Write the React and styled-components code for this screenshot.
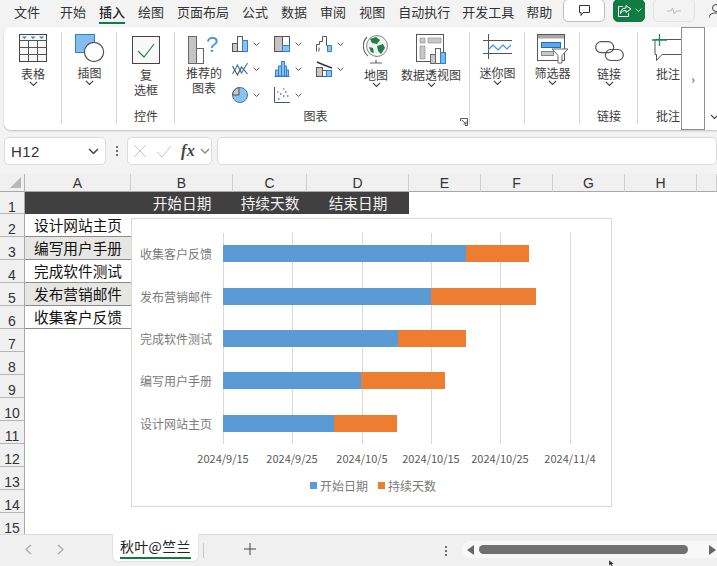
import React from 'react';
import styled, {createGlobalStyle} from 'styled-components';

const GlobalStyle = createGlobalStyle`
    html, body {
        margin: 0;
        padding: 0;
        width: 717px;
        height: 566px;
        overflow: hidden;
        background: #f3f3f3;
        font-family: "Noto Sans CJK SC", "Liberation Sans", sans-serif;
    }
    * { box-sizing: border-box; }
`;

const tabs = [
    ['文件', 14], ['开始', 20], ['插入', 13], ['绘图', 13], ['页面布局', 13], ['公式', 13],
    ['数据', 13], ['审阅', 13], ['视图', 13], ['自动执行', 13], ['开发工具', 12], ['帮助', 12],
];

const columns = [['A', 106], ['B', 102], ['C', 74], ['D', 102], ['E', 72], ['F', 72], ['G', 72], ['H', 72], ['', 20]];
const tasks = ['设计网站主页', '编写用户手册', '完成软件测试', '发布营销邮件', '收集客户反馈'];
const headers = {B: '开始日期', C: '持续天数', D: '结束日期'};
const rowNumbers = Array.from({length: 15}, (_, i) => i + 1);

const bars = [
    {name: '收集客户反馈', y: 26, start: 243, days: 63},
    {name: '发布营销邮件', y: 69, start: 208, days: 105},
    {name: '完成软件测试', y: 111, start: 175, days: 68},
    {name: '编写用户手册', y: 153, start: 138, days: 84},
    {name: '设计网站主页', y: 196, start: 111, days: 63},
];
const ticks = [
    ['2024/9/15', 92], ['2024/9/25', 161], ['2024/10/5', 231],
    ['2024/10/15', 300], ['2024/10/25', 369], ['2024/11/4', 439],
];

const Page = styled.div`
    width: 717px;
    height: 566px;
    display: flex;
    flex-direction: column;
    overflow: hidden;
    background: #f3f3f3;
    color: #333;
`;

const TopBar = styled.div`
    height: 27px;
    display: flex;
    align-items: flex-start;
    flex: none;
`;

const Tab = styled.div`
    flex: none;
    white-space: nowrap;
    margin-left: ${p => p.$gap}px;
    height: 24px;
    padding-top: 2px;
    font-size: 13px;
    line-height: 19px;
    color: ${p => (p.$active ? '#222' : '#333')};
    font-weight: ${p => (p.$active ? 500 : 400)};
    border-bottom: ${p => (p.$active ? '2px solid #107c41' : '2px solid transparent')};
`;

const TopActions = styled.div`
    margin-left: 11px;
    flex: none;
    display: flex;
    align-items: flex-start;
    gap: 8px;
`;

const ActionButton = styled.div`
    width: ${p => p.$width}px;
    flex: none;
    height: 23px;
    display: flex;
    align-items: center;
    justify-content: center;
    gap: 3px;
    margin-top: -1px;
    border-radius: 5px;
    border: 1px solid ${p => (p.$muted ? '#e4e4e4' : p.$green ? '#107c41' : '#bdbdbd')};
    background: ${p => (p.$green ? '#107c41' : p.$muted ? '#f3f3f3' : '#fff')};
`;

const Ribbon = styled.div`
    position: relative;
    height: 103px;
    margin-left: 4px;
    display: flex;
    flex: none;
    background: #fff;
    border-radius: 7px 0 0 7px;
    box-shadow: 0 1px 2px rgba(0, 0, 0, 0.22);
    font-size: 12px;
    line-height: 15px;
    color: #3c3c3c;
`;

const Group = styled.div`
    position: relative;
    width: ${p => p.$width}px;
    flex: none;
    display: flex;
    flex-direction: column;
    &::after {
        content: '';
        display: ${p => (p.$last ? 'none' : 'block')};
        position: absolute;
        right: 0;
        top: 5px;
        bottom: 6px;
        width: 1px;
        background: #d6d6d6;
    }
`;

const GroupBody = styled.div`
    flex: 1;
    min-height: 0;
    display: flex;
    justify-content: ${p => (p.$start ? 'flex-start' : 'center')};
    padding: 7px 0 0 ${p => p.$left || 0}px;
`;

const GroupCaption = styled.div`
    height: 24px;
    flex: none;
    text-align: center;
    padding-right: ${p => p.$shift || 0}px;
    line-height: 20px;
`;

const BigItem = styled.div`
    width: ${p => p.$width || 50}px;
    flex: none;
    display: flex;
    flex-direction: column;
    align-items: center;
    text-align: center;
    white-space: nowrap;
    margin-right: ${p => p.$right || 0}px;
    svg.big { flex: none; margin-bottom: ${p => p.$labelGap ?? 4}px; }
`;

const ChartPicker = styled.div`
    width: 126px;
    flex: none;
    margin: -3px 2px 0 0;
    display: grid;
    grid-template-columns: repeat(3, 42px);
    grid-auto-rows: 25.6px;
`;

const ChartType = styled.div`
    display: flex;
    align-items: center;
    gap: 5px;
`;

const Launcher = styled.svg`
    position: absolute;
    right: 2px;
    bottom: 4px;
`;

const ScrollRight = styled.div`
    position: absolute;
    left: 677px;
    top: 0;
    width: 24px;
    height: 103px;
    display: flex;
    align-items: center;
    justify-content: center;
    background: #fff;
    border: 1px solid #8f8f8f;
    font-size: 12px;
    color: #555;
`;

const CollapseSlot = styled.div`
    position: absolute;
    left: 706px;
    bottom: 11px;
    display: flex;
`;

const FormulaBar = styled.div`
    height: 28px;
    margin-top: 7px;
    flex: none;
    display: flex;
    align-items: stretch;
    padding-left: 4px;
`;

const FormulaBox = styled.div`
    width: ${p => (p.$width ? `${p.$width}px` : 'auto')};
    flex: ${p => (p.$width ? 'none' : 1)};
    display: flex;
    align-items: center;
    justify-content: space-between;
    padding: 0 6px;
    background: #fff;
    border: 1px solid #dcdcdc;
    border-radius: 5px;
    font-size: 15px;
    letter-spacing: 0.4px;
    color: #333;
    font-family: "Liberation Sans", sans-serif;
`;

const FxBox = styled(FormulaBox)`
    justify-content: flex-start;
    gap: 9px;
    padding: 0 0 0 5px;
    margin-right: 5px;
`;

const Dots = styled.div`
    width: 21px;
    flex: none;
    display: flex;
    flex-direction: column;
    align-items: center;
    justify-content: center;
    gap: 2px;
    i {
        width: 2px;
        height: 2px;
        background: #444;
        border-radius: 50%;
    }
`;

const FxLabel = styled.span`
    width: 14px;
    margin-right: -4px;
    font: italic bold 16px "Liberation Serif", serif;
    color: #444;
`;

const Sheet = styled.div`
    position: relative;
    margin-top: 9px;
    height: 360px;
    flex: none;
    overflow: hidden;
    background: #fff;
    display: grid;
    grid-template-columns: 25px 106px 102px 74px 102px 72px 72px 72px 72px 20px;
    grid-template-rows: 18px 22px repeat(14, 23px);
    font-family: "Liberation Sans", "Noto Sans CJK SC", sans-serif;
`;

const Corner = styled.div`
    background: #f0f0f0;
    border-right: 1px solid #b5b5b5;
    border-bottom: 1px solid #a8a8a8;
    position: relative;
    &::after {
        content: '';
        position: absolute;
        right: 3px;
        bottom: 3px;
        border-style: solid;
        border-width: 0 0 11px 11px;
        border-color: transparent transparent #b8b8b8 transparent;
    }
`;

const ColHead = styled.div`
    background: #f0f0f0;
    border-right: 1px solid #cfcfcf;
    border-bottom: 1px solid #a8a8a8;
    text-align: center;
    font-size: 14px;
    line-height: 19px;
    color: #333;
`;

const RowHead = styled.div`
    background: #f0f0f0;
    border-right: 1px solid #a8a8a8;
    border-bottom: 1px solid #b5b5b5;
    text-align: center;
    font-size: 14px;
    line-height: 15px;
    padding-top: 8px;
    color: #333;
    overflow: hidden;
`;

const Cell = styled.div`
    display: flex;
    align-items: center;
    justify-content: center;
    white-space: nowrap;
    padding-bottom: 2px;
    font-size: 14.67px;
    color: ${p => (p.$dark ? '#f2f2f2' : '#111')};
    background: ${p => (p.$dark ? '#404040' : p.$alt ? '#e7e6e2' : '#fff')};
    border-bottom: ${p => (p.$ruled ? '1px solid #8c8c8c' : 'none')};
`;

const ChartFrame = styled.div`
    position: absolute;
    left: 131px;
    top: 44px;
    width: 481px;
    height: 289px;
    background: #fff;
    border: 1px solid #d9d9d9;
    svg { display: block; }
    text { font-family: "Noto Sans CJK SC", "Liberation Sans", sans-serif; }
`;

const SheetBar = styled.div`
    position: relative;
    flex: 1;
    display: flex;
    align-items: flex-start;
    background: #f0f0f0;
    border-top: 1px solid #dcdcdc;
`;

const NavArrows = styled.div`
    width: 112px;
    height: 28px;
    flex: none;
    display: flex;
    align-items: center;
    gap: 25px;
    padding-left: 25px;
`;

const SheetTab = styled.div`
    width: 87px;
    height: 28px;
    margin-top: -1px;
    flex: none;
    background: #fff;
    border-radius: 0 0 6px 6px;
    border: 1px solid #e2e2e2;
    border-top: none;
    padding: 3px 7px 0;
    color: #222;
    white-space: nowrap;
    span {
        display: block;
        border-bottom: 2px solid #107c41;
        height: 22px;
        font-size: 14px;
        line-height: 19px;
        letter-spacing: 0.3px;
    }
`;

const TabSeparator = styled.div`
    width: 1px;
    height: 15px;
    margin: 8px 0 0 4px;
    background: #c8c8c8;
    flex: none;
`;

const AddSheet = styled.div`
    margin: 8px 2px 0 40px;
    width: 13px;
    height: 13px;
    display: flex;
    flex: none;
`;

const SheetDots = styled(Dots)`
    margin: 7px 0 0 180px;
    width: 14px;
    height: 17px;
`;

const ScrollTrack = styled.div`
    position: absolute;
    left: 462px;
    top: 6px;
    width: 255px;
    height: 17px;
    display: flex;
    align-items: center;
    background: #f8f8f8;
    border-radius: 8px 0 0 8px;
    padding-left: 5px;
`;

const ScrollThumb = styled.div`
    width: 209px;
    height: 9px;
    margin-left: 5px;
    border-radius: 5px;
    background: #707070;
`;

const Arrow = styled.div`
    border-style: solid;
    border-width: 5px 0 5px 0;
    border-color: transparent;
    ${p => (p.$left
        ? 'border-right: 7px solid #666;'
        : 'border-left: 7px solid #666; margin-left: 21px;')}
`;

const Pointer = styled.svg`
    position: absolute;
    left: 608px;
    top: 25px;
`;

const Chevron = ({size = 9, color = '#444'}) => (
    <svg width={size} height={size * 0.6} viewBox="0 0 10 6" style={{flex: 'none'}}>
        <path d="M1 1l4 4 4-4" fill="none" stroke={color} strokeWidth="1.3" />
    </svg>
);

const TableIcon = () => (
    <svg className="big" width="28" height="28" viewBox="0 0 28 28">
        <rect x=".5" y=".5" width="27" height="27" fill="#f7f7f7" stroke="#444" />
        <path d="M.5 6.500h27M.5 13.500h27M.5 20.500h27M9.500 6.500v21M18.500 6.500v21" stroke="#555" fill="none" />
        <path d="M3 2.500h5L5.500 5zM11.500 2.500h5L14 5zM20 2.500h5L22.500 5z" fill="#2f86d6" />
    </svg>
);

const IllustrationIcon = () => (
    <svg className="big" width="30" height="29" viewBox="0 0 30 29">
        <rect x=".5" y=".5" width="19" height="18" fill="#83bdee" stroke="#2f7fcf" />
        <circle cx="19" cy="18" r="9.600" fill="#fff" stroke="#555" strokeWidth="1.200" />
    </svg>
);

const CheckIcon = () => (
    <svg className="big" width="28" height="28" viewBox="0 0 28 28">
        <rect x=".5" y=".5" width="27" height="27" fill="#f8f8f8" stroke="#444" />
        <path d="M6 15l6 6 10-13" fill="none" stroke="#1d8a4f" strokeWidth="1.200" />
    </svg>
);

const RecommendIcon = () => (
    <svg className="big" width="32" height="36" viewBox="0 -6 32 36" style={{marginTop: -6}}>
        <rect x=".5" y="2.500" width="8" height="27" fill="#c4c4c4" stroke="#666" />
        <rect x="8.500" y="14.500" width="7" height="15" fill="#fff" stroke="#666" />
        <text x="18" y="18" fontSize="22" fill="#4a96d8" fontFamily="Liberation Sans">?</text>
    </svg>
);

const MiniChart = ({kind}) => {
    const line = '#555';
    const blue = '#8dc2ee';
    const edge = '#2f7fcf';
    const shapes = {
        column: <><rect x=".5" y="7.500" width="5" height="8" fill="#c8c8c8" stroke={line} /><rect x="5.500" y=".5" width="5" height="15" fill="#fff" stroke={line} /><rect x="10.500" y="4.500" width="5" height="11" fill={blue} stroke={edge} /></>,
        tree: <><rect x=".5" y=".5" width="8" height="15" fill="#c4c4c4" stroke={line} /><rect x="8.500" y=".5" width="7" height="9" fill="#fff" stroke={line} /><rect x="8.500" y="9.500" width="7" height="6" fill={blue} stroke={edge} /></>,
        fall: <><path d="M.5 15.500v-7h3v-3h3v-5h4v9h1" fill="none" stroke={line} /><path d="M11.500 9.500h4v6h-4z" fill={blue} stroke={edge} /><path d="M3 15.500v-4" stroke={line} /></>,
        line: <><path d="M.5 13l5-9 4 8 6-10" fill="none" stroke={edge} strokeWidth="1.200" /><path d="M.5 5l5 9 4-8 6 7" fill="none" stroke={line} strokeWidth="1.100" /></>,
        stat: <><path d="M.5 15.500h15" stroke={edge} /><path d="M1.500 15v-6h3V5h3V.5h3V5h2v4h2v6z" fill={blue} stroke={edge} /><path d="M4.500 15V9M7.500 15V5M10.500 15V5M12.500 15V9" stroke={edge} /></>,
        combo: <><rect x=".5" y="6.500" width="6" height="9" fill="#c8c8c8" stroke={line} /><rect x="6.500" y="9.500" width="4" height="6" fill="#fff" stroke={line} /><rect x="10.500" y="9.500" width="5" height="6" fill={blue} stroke={edge} /><path d="M1 1l7 3 8 3" fill="none" stroke="#333" strokeWidth="1.400" /></>,
        pie: <><circle cx="8" cy="8" r="7.500" fill={blue} stroke={edge} /><path d="M7 .6v7.400H.6A7.500 7.500 0 0 1 7 .6z" fill="#c8c8c8" stroke={line} /></>,
        scatter: <><path d="M.5 0v15.500H16" fill="none" stroke={line} /><path d="M4 12h1.500M6 7h1.500M9 9h1.500M11 5h1.500M13 9h1.500" stroke={edge} strokeWidth="1.500" /><path d="M3 5h1.500M9 2h1.500" stroke={line} /></>,
    };
    return <svg width="16" height="16" viewBox="0 0 16 16" style={{flex: 'none'}}>{shapes[kind]}</svg>;
};

const MapIcon = () => (
    <svg className="big" width="26" height="30" viewBox="0 0 26 30">
        <circle cx="14" cy="12" r="10.500" fill="#f2f2f2" stroke="#888" />
        <path d="M7 5l6-2 4 3-3 4-5-1zM14 12l6-2 2 4-4 6-3-3zM6 13l4 1 1 5-3-1z" fill="#1f7e4b" />
        <path d="M4 3a13 13 0 0 0 1 19M13 26v3M7 29h12" fill="none" stroke="#666" strokeWidth="1.200" />
    </svg>
);

const PivotIcon = () => (
    <svg className="big" width="30" height="31" viewBox="0 0 30 31">
        <rect x=".5" y=".5" width="27" height="27" fill="#fff" stroke="#555" />
        <path d="M4 4h5v5H4zM12 4h13v5H12zM4 12h5v13H4z" fill="#c8c8c8" stroke="#888" strokeWidth=".6" />
        <rect x="14.500" y="20.500" width="5" height="9" fill="#c8c8c8" stroke="#666" />
        <rect x="19.500" y="14.500" width="5" height="15" fill="#fff" stroke="#666" />
        <rect x="24.500" y="18.500" width="5" height="11" fill="#7ab8ea" stroke="#2f7fcf" />
    </svg>
);

const SparkIcon = () => (
    <svg className="big" width="30" height="25" viewBox="0 0 30 25">
        <path d="M5.500 0v25M0 6.500h29M0 19.500h29" stroke="#555" fill="none" />
        <path d="M5 16l5-5 5 5 5-5 4 4 4-4" fill="none" stroke="#3a95dc" strokeWidth="1.200" />
    </svg>
);

const FilterIcon = () => (
    <svg className="big" width="32" height="30" viewBox="0 0 32 30">
        <rect x=".5" y=".5" width="27" height="26" fill="#fff" stroke="#555" />
        <rect x="1" y="1" width="26" height="3.500" fill="#a8a8a8" />
        <rect x="4.500" y="8.500" width="19" height="5" fill="#5fa8e4" stroke="#1f6fbf" />
        <rect x="4.500" y="17.500" width="12" height="4" fill="#c8c8c8" stroke="#888" />
        <path d="M15 15h16l-6 6.500V29h-4v-7.500z" fill="#fff" stroke="#666" />
    </svg>
);

const LinkIcon = () => (
    <svg className="big" width="29" height="30" viewBox="0 -7 29 30">
        <rect x=".7" y=".7" width="18" height="11" rx="5.500" fill="none" stroke="#555" strokeWidth="1.200" />
        <rect x="10.300" y="8.500" width="18" height="11" rx="5.500" fill="none" stroke="#555" strokeWidth="1.200" />
    </svg>
);

const NoteIcon = () => (
    <svg className="big" width="33" height="29" viewBox="0 0 33 29">
        <path d="M3 5.500h30v15H10l-5.500 6V20.500H3z" fill="#fff" stroke="#555" />
        <path d="M0 6h15M7.500 0v12" stroke="#1d8a4f" strokeWidth="1.300" />
    </svg>
);

function TopIcon({kind}) {
    if (kind === 'comment') {
        return <svg width="13" height="13" viewBox="0 0 13 13"><path d="M1.500 1.500h10v7H5l-2 3v-3H1.500z" fill="none" stroke="#333" /></svg>;
    }
    if (kind === 'share') {
        return <svg width="15" height="14" viewBox="0 0 15 14"><path d="M9 1.500l5 3.500-5 3.500v-2c-3 0-4.500 1-5.500 3 0-3.500 2-5.500 5.500-5.500zM6 2.500H1.500v10h10V9" fill="none" stroke="#fff" /></svg>;
    }
    if (kind === 'pulse') {
        return <svg width="14" height="8" viewBox="0 0 14 8"><path d="M0 4h4l1.500-3 2 6 1.500-3h5" fill="none" stroke="#bdbdbd" /></svg>;
    }
    return <svg width="10" height="18" viewBox="0 0 10 18" style={{marginLeft: 6, flex: 'none'}}><circle cx="7" cy="8" r="3.500" fill="none" stroke="#444" /><path d="M0 18c0-3.500 3-5 7-5s3 0 3 0" fill="none" stroke="#444" /></svg>;
}

const Label = ({children}) => <span>{children}</span>;

export default function App() {
    return <Page>
        <GlobalStyle />
        <TopBar>
            {tabs.map(([name, gap]) => (
                <Tab key={name} $gap={gap} $active={name === '插入'}>{name}</Tab>
            ))}
            <TopActions>
                <ActionButton $width={42}><TopIcon kind="comment" /></ActionButton>
                <ActionButton $width={32} $green><TopIcon kind="share" /><Chevron size={7} color="#fff" /></ActionButton>
                <ActionButton $width={42} $muted><TopIcon kind="pulse" /></ActionButton>
                <TopIcon kind="person" />
            </TopActions>
        </TopBar>

        <Ribbon>
            <Group $width={58}>
                <GroupBody>
                    <BigItem $labelGap={4}>
                        <TableIcon />
                        <Label>表格</Label>
                        <Chevron />
                    </BigItem>
                </GroupBody>
            </Group>
            <Group $width={55}>
                <GroupBody>
                    <BigItem $labelGap={2}>
                        <IllustrationIcon />
                        <Label>插图</Label>
                        <Chevron />
                    </BigItem>
                </GroupBody>
            </Group>
            <Group $width={58}>
                <GroupBody>
                    <BigItem $labelGap={3}>
                        <div style={{height: 2}} />
                        <CheckIcon />
                        <Label>复</Label>
                        <Label>选框</Label>
                    </BigItem>
                </GroupBody>
                <GroupCaption>控件</GroupCaption>
            </Group>
            <Group $width={295}>
                <GroupBody $start $left={10}>
                    <BigItem $width={38} $right={9} $labelGap={1}>
                        <RecommendIcon />
                        <Label>推荐的</Label>
                        <Label>图表</Label>
                    </BigItem>
                    <ChartPicker>
                        {['column', 'tree', 'fall', 'line', 'stat', 'combo', 'pie', 'scatter'].map(kind => (
                            <ChartType key={kind}>
                                <MiniChart kind={kind} />
                                <Chevron size={7} />
                            </ChartType>
                        ))}
                    </ChartPicker>
                    <BigItem $width={32} $right={8} $labelGap={3}>
                        <MapIcon />
                        <Label>地图</Label>
                        <Chevron />
                    </BigItem>
                    <BigItem $width={62} $labelGap={2}>
                        <PivotIcon />
                        <Label>数据透视图</Label>
                        <Chevron />
                    </BigItem>
                </GroupBody>
                <GroupCaption $shift={14}>图表</GroupCaption>
                <Launcher width="8" height="8" viewBox="0 0 8 8">
                    <path d="M.5 3V.5H7.500V7.500H5M2 2l4 4M6 3.500V6H3.500" fill="none" stroke="#555" />
                </Launcher>
            </Group>
            <Group $width={55}>
                <GroupBody>
                    <BigItem $labelGap={6}>
                        <SparkIcon />
                        <Label>迷你图</Label>
                        <Chevron />
                    </BigItem>
                </GroupBody>
            </Group>
            <Group $width={55}>
                <GroupBody>
                    <BigItem $labelGap={1}>
                        <FilterIcon />
                        <Label>筛选器</Label>
                        <Chevron />
                    </BigItem>
                </GroupBody>
            </Group>
            <Group $width={58}>
                <GroupBody>
                    <BigItem $labelGap={2}>
                        <LinkIcon />
                        <Label>链接</Label>
                        <Chevron />
                    </BigItem>
                </GroupBody>
                <GroupCaption>链接</GroupCaption>
            </Group>
            <Group $width={60} $last>
                <GroupBody $start $left={10}>
                    <BigItem $width={40} $labelGap={3}>
                        <NoteIcon />
                        <Label>批注</Label>
                    </BigItem>
                </GroupBody>
                <GroupCaption>批注</GroupCaption>
            </Group>
            <ScrollRight>›</ScrollRight>
            <CollapseSlot><Chevron /></CollapseSlot>
        </Ribbon>

        <FormulaBar>
            <FormulaBox $width={102}>
                H12
                <Chevron size={11} />
            </FormulaBox>
            <Dots><i /><i /><i /></Dots>
            <FxBox $width={85}>
                <svg width="14" height="14" viewBox="0 0 14 14"><path d="M1 1l12 12M13 1L1 13" stroke="#c4c4c4" fill="none" /></svg>
                <svg width="16" height="13" viewBox="0 0 16 13"><path d="M1 7l5 5L15 1" stroke="#c4c4c4" fill="none" /></svg>
                <FxLabel>fx</FxLabel>
                <Chevron size={10} color="#888" />
            </FxBox>
            <FormulaBox />
        </FormulaBar>

        <Sheet>
            <Corner />
            {columns.map(([name]) => <ColHead key={name || 'rest'}>{name}</ColHead>)}
            {rowNumbers.map(n => (
                <React.Fragment key={n}>
                    <RowHead>{n}</RowHead>
                    {columns.map(([name], i) => {
                        const dark = n === 1 && i < 4;
                        const task = i === 0 && n > 1 && n < 7 ? tasks[n - 2] : null;
                        return (
                            <Cell key={name || 'rest'} $dark={dark} $alt={task && n % 2 === 1} $ruled={Boolean(task)}>
                                {task || (n === 1 && headers[name])}
                            </Cell>
                        );
                    })}
                </React.Fragment>
            ))}
            <ChartFrame>
                <svg width="479" height="287" viewBox="0 0 479 287">
                    {ticks.map(([label, x]) => (
                        <g key={label}>
                            <line x1={x - 0.5} x2={x - 0.5} y1="14" y2="225" stroke="#d9d9d9" />
                            <text x={x - 1} y="244" textAnchor="middle" fontSize="11" fill="#595959">{label}</text>
                        </g>
                    ))}
                    {bars.map(bar => (
                        <g key={bar.name}>
                            <text x="80" y={bar.y + 14} textAnchor="end" fontSize="12" fill="#7a7a7a">{bar.name}</text>
                            <rect x="91" y={bar.y} width={bar.start} height="17" fill="#5b9bd5" />
                            <rect x={91 + bar.start} y={bar.y} width={bar.days} height="17" fill="#ed7d31" />
                        </g>
                    ))}
                    <rect x="178" y="263" width="7" height="7" fill="#5b9bd5" />
                    <text x="188" y="272" fontSize="12" fill="#7a7a7a">开始日期</text>
                    <rect x="246" y="263" width="7" height="7" fill="#ed7d31" />
                    <text x="256" y="272" fontSize="12" fill="#7a7a7a">持续天数</text>
                </svg>
            </ChartFrame>
        </Sheet>

        <SheetBar>
            <NavArrows>
                <svg width="7" height="11" viewBox="0 0 7 11"><path d="M6 1L1 5.500 6 10" fill="none" stroke="#a6a6a6" strokeWidth="1.200" /></svg>
                <svg width="7" height="11" viewBox="0 0 7 11"><path d="M1 1l5 4.500L1 10" fill="none" stroke="#a6a6a6" strokeWidth="1.200" /></svg>
            </NavArrows>
            <SheetTab><span>秋叶@竺兰</span></SheetTab>
            <TabSeparator />
            <AddSheet>
                <svg width="12" height="12" viewBox="0 0 12 12"><path d="M6 0v12M0 6h12" stroke="#444" /></svg>
            </AddSheet>
            <SheetDots><i /><i /><i /></SheetDots>
            <ScrollTrack>
                <Arrow $left />
                <ScrollThumb />
                <Arrow />
            </ScrollTrack>
            <Pointer width="8" height="7" viewBox="0 0 8 7"><path d="M1 0v6l1.500-1.500L4 7l1-.500L4 4h2z" fill="#222" stroke="#fff" strokeWidth=".4" /></Pointer>
        </SheetBar>
    </Page>;
}
